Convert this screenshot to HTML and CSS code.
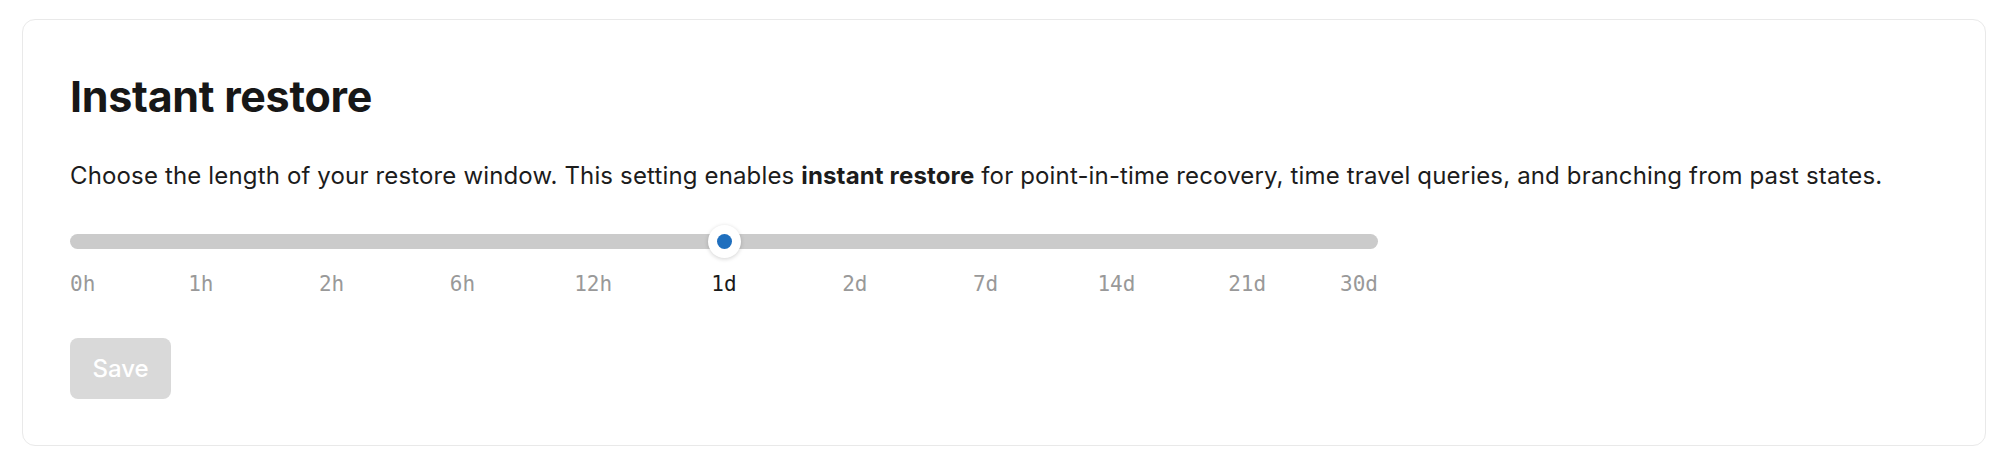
FILE: index.html
```html
<!DOCTYPE html>
<html lang="en">
<head>
<meta charset="utf-8">
<title>Instant restore</title>
<link rel="stylesheet" href="styles.css">
</head>
<body>
<section class="card">
  <h1 class="title">Instant restore</h1>
  <p class="desc">Choose the length of your restore window. This setting enables <strong>instant restore</strong> for point-in-time recovery, time travel queries, and branching from past states.</p>
  <div class="slider">
    <div class="track">
      <div class="thumb" style="left: 50%;"><span class="dot"></span></div>
    </div>
    <div class="ticks">
      <span class="tick first"><span>0h</span></span>
      <span class="tick"><span>1h</span></span>
      <span class="tick"><span>2h</span></span>
      <span class="tick"><span>6h</span></span>
      <span class="tick"><span>12h</span></span>
      <span class="tick active"><span>1d</span></span>
      <span class="tick"><span>2d</span></span>
      <span class="tick"><span>7d</span></span>
      <span class="tick"><span>14d</span></span>
      <span class="tick"><span>21d</span></span>
      <span class="tick last"><span>30d</span></span>
    </div>
  </div>
  <button class="save" disabled>Save</button>
</section>
</body>
</html>
```
FILE: styles.css
```css
* { box-sizing: border-box; }
html, body { margin: 0; padding: 0; background: #ffffff; }
body {
  padding: 19px 14px 20px 22px;
  font-family: Inter, "Noto Sans", "Liberation Sans", sans-serif;
  color: #1a1a1a;
}
.card {
  border: 1px solid #e9e9e9;
  border-radius: 13px;
  height: 427px;
  padding: 50px 47px 0 47px;
  background: #fff;
}
.title {
  margin: 0;
  font-size: 43px;
  font-weight: 700;
  letter-spacing: -0.3px;
  line-height: 53px;
  color: #171717;
}
.desc {
  margin: 38px 0 0 0;
  font-size: 24px;
  letter-spacing: 0.15px;
  line-height: 29px;
  color: #1c1c1c;
}
.desc strong { font-weight: 700; }
.slider {
  width: 1308px;
  margin-top: 44px;
}
.track {
  position: relative;
  height: 15px;
  border-radius: 8px;
  background: #cbcbcb;
}
.thumb {
  position: absolute;
  top: 50%;
  width: 33px;
  height: 33px;
  margin-left: -16.5px;
  margin-top: -16.5px;
  border-radius: 50%;
  background: #fff;
  box-shadow: 0 1px 4px rgba(0,0,0,0.18);
  display: flex;
  align-items: center;
  justify-content: center;
}
.dot {
  width: 15px;
  height: 15px;
  border-radius: 50%;
  background: #1f6fbe;
}
.ticks {
  display: flex;
  justify-content: space-between;
  margin-top: 22px;
  font-family: "DejaVu Sans Mono", "Liberation Mono", monospace;
  font-size: 21px;
  line-height: 26px;
  color: #999999;
}
.tick {
  width: 0;
  display: flex;
  justify-content: center;
  white-space: nowrap;
}
.tick.first { justify-content: flex-start; }
.tick.last { justify-content: flex-end; }
.tick.active { color: #1a1a1a; }
.save {
  margin-top: 41px;
  width: 101px;
  height: 61px;
  border: 0;
  border-radius: 8px;
  background: #d9d9d9;
  color: #ffffff;
  font-family: Inter, "Noto Sans", "Liberation Sans", sans-serif;
  font-size: 24px;
  font-weight: 500;
  padding: 0;
}
```
